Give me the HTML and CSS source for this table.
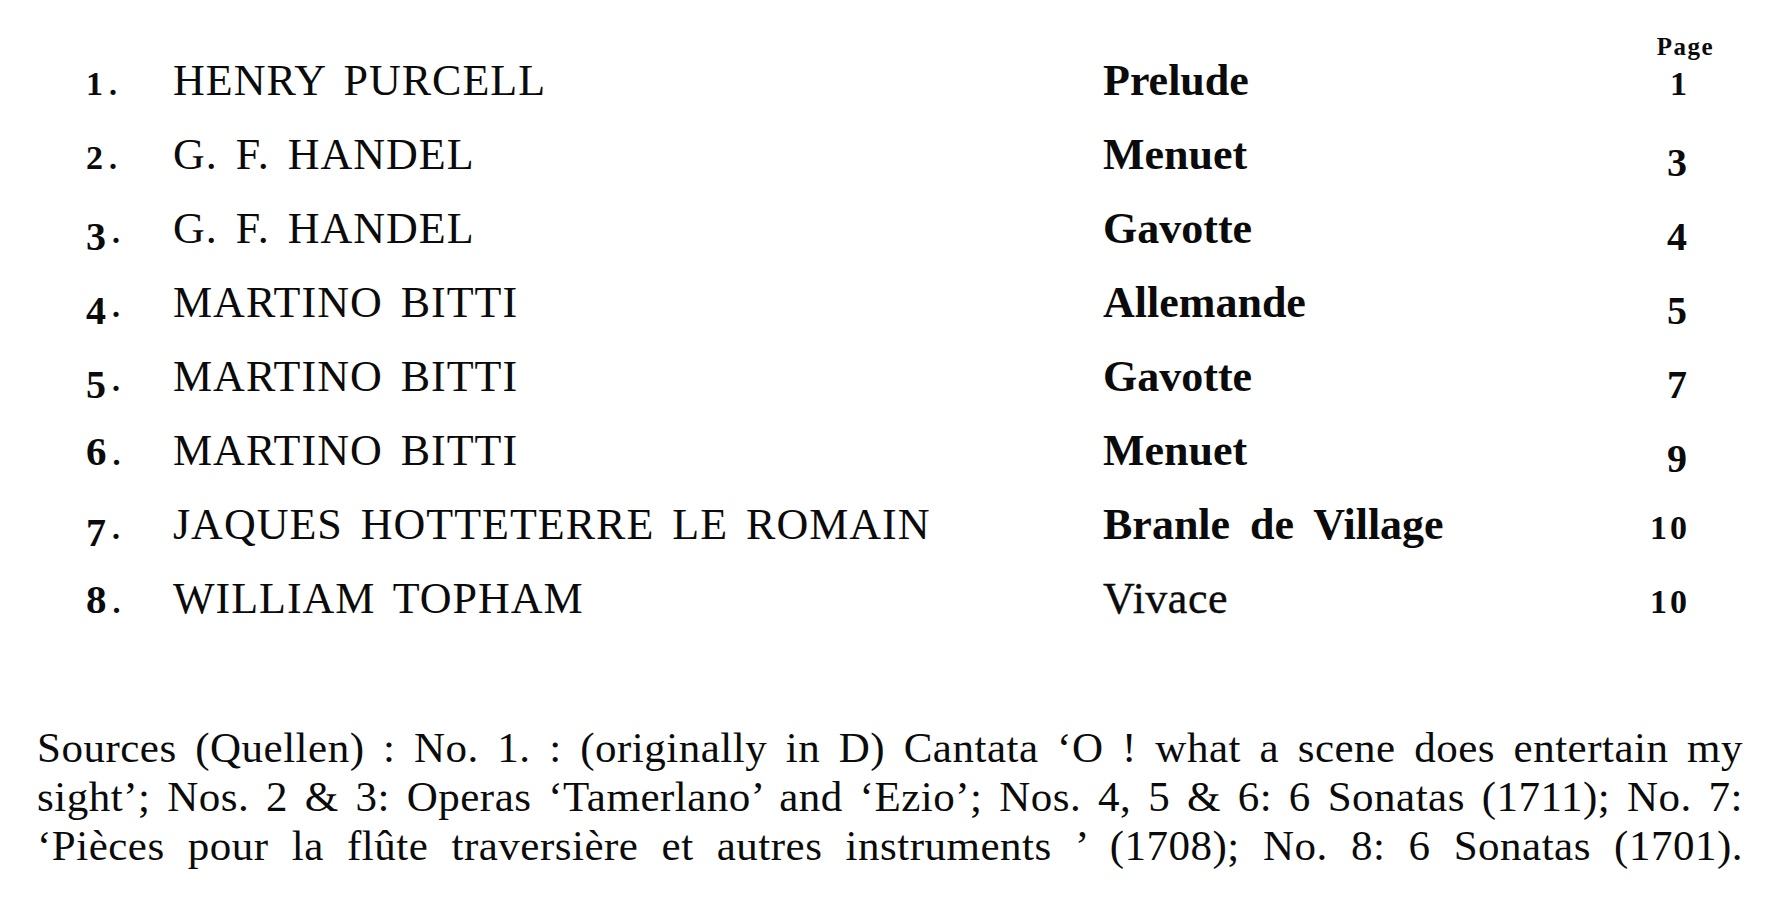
FILE: index.html
```html
<!DOCTYPE html>
<html lang="en">
<head>
<meta charset="utf-8">
<title>Contents</title>
<link rel="stylesheet" href="styles.css">
</head>
<body>
<div class="page">
  <div class="toc">
    <div class="head"><span class="head-label">Page</span></div>
    <div class="rows">
      <div class="row">
        <span class="no"><span class="f lo">1</span><span class="dot">.</span></span>
        <span class="name">HENRY PURCELL</span>
        <span class="title">Prelude</span>
        <span class="pg"><span class="f lo">1</span></span>
      </div>
      <div class="row">
        <span class="no"><span class="f lo">2</span><span class="dot">.</span></span>
        <span class="name">G. F. HANDEL</span>
        <span class="title">Menuet</span>
        <span class="pg"><span class="f dn">3</span></span>
      </div>
      <div class="row">
        <span class="no"><span class="f dn">3</span><span class="dot">.</span></span>
        <span class="name">G. F. HANDEL</span>
        <span class="title">Gavotte</span>
        <span class="pg"><span class="f dn">4</span></span>
      </div>
      <div class="row">
        <span class="no"><span class="f dn">4</span><span class="dot">.</span></span>
        <span class="name">MARTINO BITTI</span>
        <span class="title">Allemande</span>
        <span class="pg"><span class="f dn">5</span></span>
      </div>
      <div class="row">
        <span class="no"><span class="f dn">5</span><span class="dot">.</span></span>
        <span class="name">MARTINO BITTI</span>
        <span class="title">Gavotte</span>
        <span class="pg"><span class="f dn">7</span></span>
      </div>
      <div class="row">
        <span class="no"><span class="f up">6</span><span class="dot">.</span></span>
        <span class="name">MARTINO BITTI</span>
        <span class="title">Menuet</span>
        <span class="pg"><span class="f dn">9</span></span>
      </div>
      <div class="row">
        <span class="no"><span class="f dn">7</span><span class="dot">.</span></span>
        <span class="name">JAQUES HOTTETERRE LE ROMAIN</span>
        <span class="title">Branle de Village</span>
        <span class="pg"><span class="f lo">10</span></span>
      </div>
      <div class="row">
        <span class="no"><span class="f up">8</span><span class="dot">.</span></span>
        <span class="name">WILLIAM TOPHAM</span>
        <span class="title light">Vivace</span>
        <span class="pg"><span class="f lo">10</span></span>
      </div>
    </div>
  </div>
  <p class="sources">Sources (Quellen) : No. 1. : (originally in D) Cantata ‘O ! what a scene does entertain my<br>sight’; Nos. 2 &amp; 3: Operas ‘Tamerlano’ and ‘Ezio’; Nos. 4, 5 &amp; 6: 6 Sonatas (1711); No. 7:<br>‘Pièces pour la flûte traversière et autres instruments ’ (1708); No. 8: 6 Sonatas (1701).</p>
</div>
</body>
</html>
```

FILE: styles.css
```css
html, body {
  margin: 0;
  padding: 0;
  background: #ffffff;
}

body {
  font-family: "Liberation Serif", "Times New Roman", serif;
  color: #0b0b0b;
  width: 1789px;
  height: 911px;
  overflow: hidden;
}

.page {
  display: flex;
  flex-direction: column;
}

.toc {
  padding: 41px 75px 0 86px;
  display: flex;
  flex-direction: column;
}

.head {
  display: flex;
  justify-content: flex-end;
  line-height: 12px;
  height: 12px;
}

.head-label {
  font-size: 25px;
  font-weight: bold;
  letter-spacing: 1.5px;
}

.rows {
  margin-top: 6px;
  display: grid;
  grid-auto-rows: 44px;
  row-gap: 30px;
}

.row {
  display: grid;
  grid-template-columns: 87px 930px 1fr 64px;
  align-items: baseline;
  height: 44px;
  font-size: 44px;
  line-height: 44px;
}

.no {
  font-weight: bold;
  white-space: nowrap;
}

.dot {
  font-size: 32px;
  line-height: 0;
  margin-left: 6px;
}

.name {
  letter-spacing: 1px;
  word-spacing: 6px;
  white-space: nowrap;
}

.title {
  font-weight: bold;
  word-spacing: 9px;
  white-space: nowrap;
}

.title.light {
  font-weight: normal;
  letter-spacing: 0.5px;
  -webkit-text-stroke: 0.4px #0b0b0b;
}

.pg {
  font-weight: bold;
  text-align: right;
  padding-right: 24px;
  white-space: nowrap;
}

.f {
  line-height: 0;
  font-weight: bold;
}

.pg .f {
  letter-spacing: 3px;
}

.f.lo {
  font-size: 34px;
}

.f.dn {
  font-size: 40px;
  vertical-align: -7px;
}

.f.up {
  font-size: 41px;
}

.sources {
  margin: 102px 0 0 0;
  padding: 0 46px 0 37px;
  font-size: 43px;
  line-height: 49px;
  letter-spacing: 0.5px;
  text-align: justify;
  text-align-last: justify;
}
```
